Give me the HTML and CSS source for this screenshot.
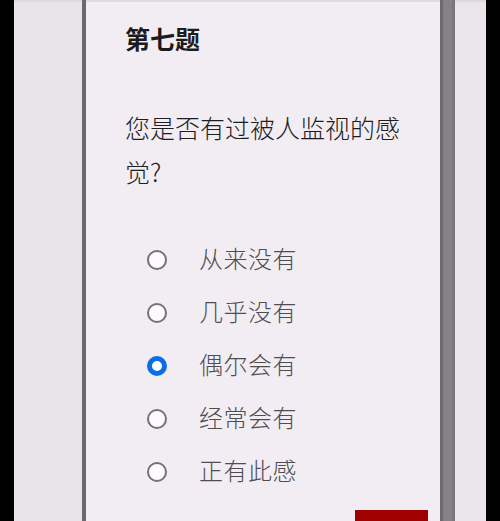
FILE: index.html
```html
<!DOCTYPE html>
<html lang="zh">
<head>
<meta charset="utf-8">
<link rel="stylesheet" href="styles.css">
</head>
<body>
<div class="frame">
  <div class="edge"></div>
  <div class="side-left"></div>
  <div class="divider"></div>
  <main class="card">
    <h1 class="title">第七题</h1>
    <p class="question">您是否有过被人监视的感觉?</p>
    <ul class="options">
      <li class="option"><span class="radio"></span><span class="label">从来没有</span></li>
      <li class="option"><span class="radio"></span><span class="label">几乎没有</span></li>
      <li class="option"><span class="radio checked"></span><span class="label">偶尔会有</span></li>
      <li class="option"><span class="radio"></span><span class="label">经常会有</span></li>
      <li class="option"><span class="radio"></span><span class="label">正有此感</span></li>
    </ul>
    <div class="actions"><button class="next"></button></div>
  </main>
  <div class="scrollbar"></div>
  <div class="side-right"></div>
  <div class="edge"></div>
</div>
</body>
</html>
```

FILE: styles.css
```css
html, body {
  margin: 0;
  padding: 0;
  width: 500px;
  height: 521px;
  overflow: hidden;
  background: #000;
}
.frame {
  display: flex;
  width: 500px;
  height: 521px;
  font-family: "Noto Sans CJK SC", "Noto Sans", sans-serif;
}
.edge {
  width: 14px;
  flex: none;
  background: #000;
}
.side-left {
  width: 68px;
  flex: none;
  background: #e8e4e9;
  border-top: 2px solid #dcd8dc;
}
.divider {
  width: 4px;
  flex: none;
  background: #6c686d;
}
.card {
  width: 354px;
  flex: none;
  background: #f1edf2;
  border-top: 2px solid #dedade;
  box-sizing: border-box;
  display: flex;
  flex-direction: column;
  padding-left: 39px;
}
.title {
  margin: 18px 0 0;
  font-size: 25px;
  line-height: 36px;
  font-weight: 700;
  color: #1c1b1d;
}
.question {
  margin: 49px 0 0;
  font-size: 25px;
  line-height: 44px;
  font-weight: 300;
  color: #1e1d1f;
  width: 290px;
}
.options {
  list-style: none;
  margin: 40px 0 0;
  padding: 0 0 0 22px;
}
.option {
  display: flex;
  align-items: center;
  height: 53px;
}
.radio {
  width: 16px;
  height: 16px;
  border: 2px solid #747275;
  border-radius: 50%;
  background: #fbfafc;
  flex: none;
  margin-right: 32px;
}
.radio.checked {
  width: 10px;
  height: 10px;
  border: 5px solid #0b6fe3;
  background: #ffffff;
}
.label {
  font-size: 24px;
  line-height: 30px;
  font-weight: 300;
  color: #4f4d50;
  letter-spacing: 0.5px;
  position: relative;
  top: -2px;
}
.actions {
  display: flex;
  justify-content: flex-end;
  margin-top: 12px;
  padding-right: 12px;
}
.next {
  width: 73px;
  height: 34px;
  border: none;
  background: #a10001;
  padding: 0;
}
.scrollbar {
  width: 15px;
  flex: none;
  background: linear-gradient(to right, #6e6a6f 0, #6e6a6f 3px, #858186 3px, #858186 12px, #7a767b 12px);
}
.side-right {
  width: 31px;
  flex: none;
  background: #e9e5ea;
  border-top: 2px solid #dcd8dc;
}
```
